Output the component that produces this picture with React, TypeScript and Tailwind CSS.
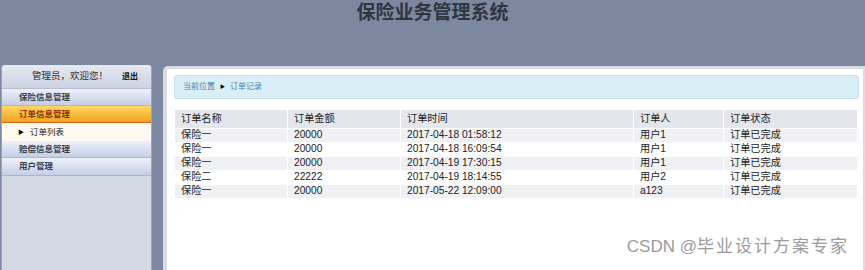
import React from 'react';

const menuTop = [{ label: '保险信息管理' }];

const orders = [
  { name: '保险一', amount: '20000', time: '2017-04-18 01:58:12', user: '用户1', status: '订单已完成' },
  { name: '保险一', amount: '20000', time: '2017-04-18 16:09:54', user: '用户1', status: '订单已完成' },
  { name: '保险一', amount: '20000', time: '2017-04-19 17:30:15', user: '用户1', status: '订单已完成' },
  { name: '保险二', amount: '22222', time: '2017-04-19 18:14:55', user: '用户2', status: '订单已完成' },
  { name: '保险一', amount: '20000', time: '2017-05-22 12:09:00', user: 'a123', status: '订单已完成' },
];

const cols = ['w-[113px]', 'w-[113px]', 'w-[233px]', 'w-[90px]', ''];

function MenuItem({ label }: { label: string }) {
  return (
    <div className="flex h-[17px] items-center border-b border-[#aab6cf] bg-gradient-to-b from-[#eef1f9] to-[#c4cee6] pl-[17px] text-[8.5px] font-semibold text-[#3a3f4a]">
      {label}
    </div>
  );
}

export default function App() {
  return (
    <div className="relative flex h-[270px] w-[865px] flex-col overflow-hidden bg-[#7b889f] font-['Liberation_Sans','Noto_Sans_CJK_SC',sans-serif]">
      {/* Header */}
      <div className="h-[65px] pt-[3px] text-center text-[19px] font-bold leading-none text-[#30363f]">
        保险业务管理系统
      </div>

      <div className="flex flex-1">
        {/* Sidebar */}
        <aside className="ml-px flex w-[151px] flex-col overflow-hidden rounded-t-[4px] border-x border-[#9aa5b8] bg-[#d3d9e2]">
          <div className="flex h-[24px] items-center border-b border-[#b7c0d2] bg-gradient-to-b from-[#e6e9f1] to-[#cbd2e1]">
            <span className="ml-[30px] text-[9.5px] text-[#2a2d33]">管理员，欢迎您！</span>
            <span className="ml-[14px] text-[8px] font-bold text-[#111]">退出</span>
          </div>
          {menuTop.map((m) => (
            <MenuItem key={m.label} label={m.label} />
          ))}
          <div className="flex h-[17px] items-center border-b border-[#d8621a] bg-gradient-to-b from-[#ffd65e] to-[#f0a31b] pl-[17px] text-[8.5px] font-semibold text-[#8a2f0c]">
            订单信息管理
          </div>
          <div className="flex h-[18px] items-center bg-[#fff9f0] pl-[16px] text-[8.5px] text-[#222]">
            <span className="mr-[6px] text-[6px] text-black">▶</span>
            订单列表
          </div>
          <MenuItem label="赔偿信息管理" />
          <div className="flex h-[18px] items-center border-b border-[#aab6cf] bg-gradient-to-b from-[#eef1f9] to-[#c4cee6] pl-[17px] text-[8.5px] font-semibold text-[#3a3f4a]">
            用户管理
          </div>
        </aside>

        {/* Main */}
        <main className="ml-[11px] mt-px flex-1 rounded-tl-[5px] border-l-4 border-r-2 border-t-[3px] border-[#d8dde5] bg-white pl-[7px] pr-[4px] pt-[6px]">
          <div className="flex h-[24px] items-center rounded-[3px] border border-[#c6e1ed] bg-[#d9eef6] pl-[8px] text-[8px] text-[#537fa3]">
            当前位置
            <span className="mx-[5px] text-[5px] text-black">▶</span>
            订单记录
          </div>

          <table className="mt-[11px] w-[684px] border-collapse text-left text-[10.2px] text-[#222]">
            <thead>
              <tr className="h-[18px] bg-[#e4e6eb]">
                {['订单名称', '订单金额', '订单时间', '订单人', '订单状态'].map((h, i) => (
                  <th key={h} className={`${cols[i]} border-x border-white px-[6px] font-normal`}>
                    {h}
                  </th>
                ))}
              </tr>
            </thead>
            <tbody>
              {orders.map((o, i) => (
                <tr key={i} className={`h-[14px] ${i % 2 === 0 ? 'bg-[#eff0f4]' : 'bg-white'}`}>
                  {[o.name, o.amount, o.time, o.user, o.status].map((v, j) => (
                    <td key={j} className="border border-white px-[6px] py-0 leading-[12px]">
                      {v}
                    </td>
                  ))}
                </tr>
              ))}
            </tbody>
          </table>
        </main>
      </div>

      {/* Watermark */}
      <div className="absolute bottom-[15px] right-[16px] text-[17px] leading-none text-[#9a9a9a]">
        CSDN @<span className="tracking-[2px]">毕业设计方案专家</span>
      </div>
    </div>
  );
}
